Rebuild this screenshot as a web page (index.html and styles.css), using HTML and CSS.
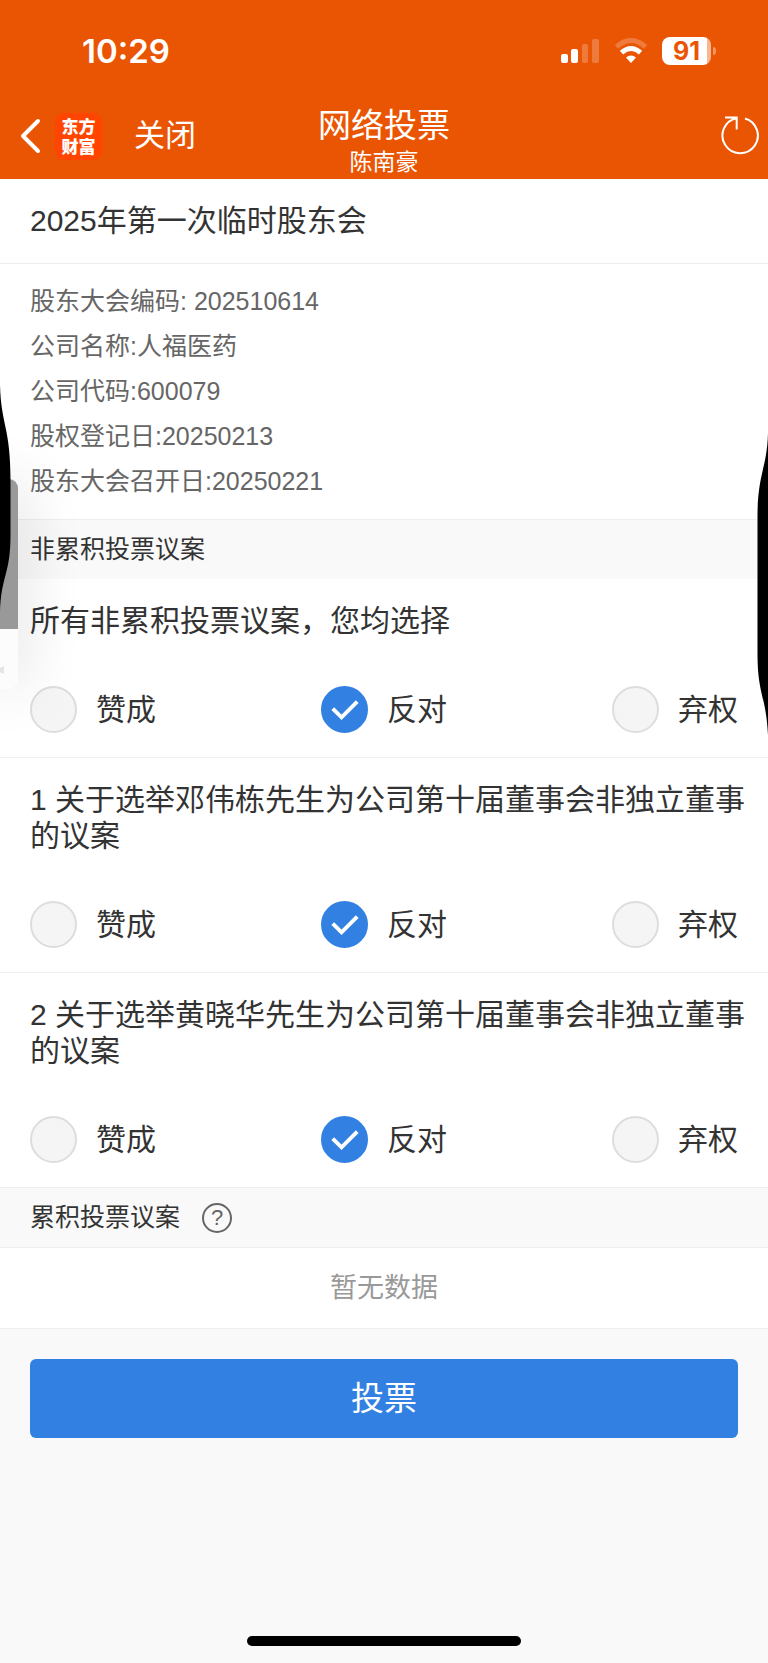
FILE: index.html
```html
<!DOCTYPE html>
<html lang="zh-CN">
<head>
<meta charset="utf-8">
<meta name="viewport" content="width=device-width, initial-scale=1">
<title>网络投票</title>
<link rel="stylesheet" href="styles.css">
</head>
<body>
<div class="app">
  <header class="top">
    <div class="status">
      <span class="status-time">10:29</span>
      <div class="status-icons">
        <svg class="signal" width="40" height="26" viewBox="0 0 40 26" fill="#fff" aria-hidden="true">
          <rect x="1" y="16" width="7" height="9" rx="2"/>
          <rect x="11" y="11" width="7" height="14" rx="2"/>
          <rect x="22" y="6" width="6" height="19" rx="2" opacity=".22"/>
          <rect x="32" y="1" width="7" height="24" rx="2" opacity=".22"/>
        </svg>
        <svg class="wifi" width="34" height="26" viewBox="0 0 34 26" aria-hidden="true">
          <path d="M2.5 8.8Q17-3.8 31.500 8.800" fill="none" stroke="#fff" stroke-width="5" opacity=".22"/>
          <path d="M7.500 14.600Q17 6.400 26.500 14.600" fill="none" stroke="#fff" stroke-width="5"/>
          <path d="M12 19.500Q17 15.500 22 19.500L17 25Z" fill="#fff"/>
        </svg>
        <div class="battery"><span class="battery-body">91</span><span class="battery-tip"></span></div>
      </div>
    </div>
    <nav class="nav">
      <div class="nav-left">
        <button class="icon-button" type="button" aria-label="返回">
          <svg width="22" height="36" viewBox="0 0 22 36" fill="none" stroke="#fff" stroke-width="4" stroke-linecap="round" stroke-linejoin="round"><path d="M19 3L4 18L19 33"/></svg>
        </button>
        <div class="logo"><span class="logo-text">东方财富</span></div>
        <button class="close" type="button">关闭</button>
      </div>
      <div class="nav-title">
        <h1 class="page-title">网络投票</h1>
        <p class="user-name">陈南豪</p>
      </div>
      <button class="icon-button refresh" type="button" aria-label="刷新">
        <svg width="40" height="40" viewBox="0 0 40 40" fill="none" stroke="#fff" stroke-width="2"><path d="M24 2.500A17.700 17.700 0 1 1 15.500 2.200M4 1.500H15.700V13.500"/></svg>
      </button>
    </nav>
  </header>

  <main>
    <h2 class="meeting">2025年第一次临时股东会</h2>
    <div class="details">
      <p>股东大会编码: 202510614</p>
      <p>公司名称:人福医药</p>
      <p>公司代码:600079</p>
      <p>股权登记日:20250213</p>
      <p>股东大会召开日:20250221</p>
    </div>

    <form>
      <h3 class="section">非累积投票议案</h3>

      <fieldset class="proposal">
        <legend class="question">所有非累积投票议案，您均选择</legend>
        <div class="options">
          <label class="option"><span class="mark"><input class="radio" type="radio" name="all"><svg class="tick" viewBox="0 0 48 48"><path d="M12 23L21 32L37 16"/></svg></span>赞成</label>
          <label class="option"><span class="mark"><input class="radio" type="radio" name="all" checked><svg class="tick" viewBox="0 0 48 48"><path d="M12 23L21 32L37 16"/></svg></span>反对</label>
          <label class="option"><span class="mark"><input class="radio" type="radio" name="all"><svg class="tick" viewBox="0 0 48 48"><path d="M12 23L21 32L37 16"/></svg></span>弃权</label>
        </div>
      </fieldset>

      <fieldset class="proposal">
        <legend class="question">1 关于选举邓伟栋先生为公司第十届董事会非独立董事的议案</legend>
        <div class="options">
          <label class="option"><span class="mark"><input class="radio" type="radio" name="p1"><svg class="tick" viewBox="0 0 48 48"><path d="M12 23L21 32L37 16"/></svg></span>赞成</label>
          <label class="option"><span class="mark"><input class="radio" type="radio" name="p1" checked><svg class="tick" viewBox="0 0 48 48"><path d="M12 23L21 32L37 16"/></svg></span>反对</label>
          <label class="option"><span class="mark"><input class="radio" type="radio" name="p1"><svg class="tick" viewBox="0 0 48 48"><path d="M12 23L21 32L37 16"/></svg></span>弃权</label>
        </div>
      </fieldset>

      <fieldset class="proposal last">
        <legend class="question">2 关于选举黄晓华先生为公司第十届董事会非独立董事的议案</legend>
        <div class="options">
          <label class="option"><span class="mark"><input class="radio" type="radio" name="p2"><svg class="tick" viewBox="0 0 48 48"><path d="M12 23L21 32L37 16"/></svg></span>赞成</label>
          <label class="option"><span class="mark"><input class="radio" type="radio" name="p2" checked><svg class="tick" viewBox="0 0 48 48"><path d="M12 23L21 32L37 16"/></svg></span>反对</label>
          <label class="option"><span class="mark"><input class="radio" type="radio" name="p2"><svg class="tick" viewBox="0 0 48 48"><path d="M12 23L21 32L37 16"/></svg></span>弃权</label>
        </div>
      </fieldset>

      <h3 class="section">累积投票议案 <button class="help" type="button" aria-label="说明">?</button></h3>
      <p class="empty">暂无数据</p>
      <div class="submit-row"><button class="submit" type="submit">投票</button></div>
    </form>
  </main>

  <footer class="home"><div class="home-bar"></div></footer>

  <div class="panel" aria-hidden="true">
    <div class="panel-top"></div>
    <svg class="panel-icon" width="6" height="10" viewBox="0 0 6 10"><path d="M0 3L4 1V9L0 7Z" fill="#e4e4e4"/></svg>
  </div>
  <svg class="edge edge-left" width="12" height="228" viewBox="0 0 12 228" aria-hidden="true"><path d="M0 0C1 40 10.500 42 10.500 95V150C10.500 190 1 190 0 228Z"/></svg>
  <svg class="edge edge-right" width="12" height="302" viewBox="0 0 12 302" aria-hidden="true"><path d="M12 0C11 36 1.500 40 1.500 84V220C1.500 262 10 262 12 302Z"/></svg>
</div>
</body>
</html>
```

FILE: styles.css
```css
* {
  box-sizing: border-box;
}

body,
h1,
h2,
h3,
p,
fieldset,
legend {
  margin: 0;
  padding: 0;
  border: 0;
  font-weight: 400;
}

body {
  background: #f9f9f9;
  color: #333;
  font-family: "Liberation Sans", "Noto Sans CJK SC", sans-serif;
  font-size: 30px;
}

button {
  padding: 0;
  border: 0;
  background: none;
  color: inherit;
  font-family: inherit;
}

svg {
  display: block;
}

.app {
  position: relative;
  display: flex;
  flex-direction: column;
  min-height: 100vh;
  overflow: hidden;
}

/* Header */
.top {
  background: #ea5504;
  color: #fff;
}

.status {
  display: flex;
  justify-content: space-between;
  align-items: center;
  padding: 30px 52px 21px 82px;
}

.status-time {
  font: 600 33px/42px Inter, sans-serif;
}

.status-icons {
  display: flex;
  align-items: center;
  gap: 14px;
}

.battery {
  display: flex;
  align-items: center;
  gap: 2px;
}

.battery-body {
  width: 49px;
  border-radius: 8px;
  background: linear-gradient(to right, #fff 45px, #f7b794 45px);
  color: #ea5504;
  font: 700 25px/28px Inter, sans-serif;
  text-align: center;
}

.battery-tip {
  width: 3px;
  height: 8px;
  border-radius: 0 4px 4px 0;
  background: #f19460;
}

.nav {
  display: grid;
  grid-template-columns: 1fr auto 1fr;
  align-items: center;
  height: 86px;
  padding: 0 7px 0 19px;
}

.nav-left {
  display: flex;
  align-items: center;
}

.logo {
  display: flex;
  align-items: center;
  justify-content: center;
  width: 47px;
  height: 47px;
  margin: 0 32px 0 14px;
  border-radius: 9px;
  background: #ff4500;
}

.logo-text {
  width: 34px;
  font: 900 17px/20px "Noto Sans CJK SC", sans-serif;
}

.close {
  font-size: 31px;
  line-height: 40px;
}

.nav-title {
  padding: 9px 12px 0 0;
  text-align: center;
}

.page-title {
  font-size: 33px;
  line-height: 42px;
}

.user-name {
  font-size: 23px;
  line-height: 30px;
}

.refresh {
  justify-self: end;
}

/* Meeting */
.meeting {
  padding: 20px 30px;
  border-bottom: 1px solid #ececec;
  background: #fff;
  font-size: 30px;
  line-height: 44px;
}

.details {
  padding: 15px 30px;
  background: #fff;
  color: #666;
  font-size: 25px;
  line-height: 45px;
}

.section {
  display: flex;
  align-items: center;
  gap: 22px;
  padding: 0 30px;
  border-top: 1px solid #eee;
  font-size: 25px;
  line-height: 59px;
}

.help {
  width: 30px;
  height: 30px;
  border: 2px solid #666;
  border-radius: 50%;
  color: #666;
  font-size: 22px;
  line-height: 26px;
}

/* Proposals */
.proposal {
  min-width: 0;
  padding: 24px 30px;
  border-bottom: 1px solid #f0f0f0;
  background: #fff;
}

.last {
  border-bottom: 0;
}

/* Floating the legend keeps it inside the padding of its fieldset */
.question {
  float: left;
  margin-right: -12px;
  padding-bottom: 47px;
  line-height: 36px;
}

.options {
  display: flex;
  clear: both;
  justify-content: space-between;
}

.option {
  display: flex;
  align-items: center;
  gap: 19px;
  line-height: 40px;
}

.mark {
  display: grid;
  width: 47px;
  height: 47px;
}

.radio,
.tick {
  grid-area: 1 / 1;
}

.radio {
  appearance: none;
  width: 47px;
  height: 47px;
  margin: 0;
  border: 2px solid #ddd;
  border-radius: 50%;
  background: #f5f5f5;
}

.radio:checked {
  border-color: #3281e2;
  background: #3281e2;
}

.tick {
  visibility: hidden;
  pointer-events: none;
  fill: none;
  stroke: #fff;
  stroke-width: 4;
}

.radio:checked + .tick {
  visibility: visible;
  z-index: 1;
}

.empty {
  padding: 20px 0;
  border-top: 1px solid #eee;
  border-bottom: 1px solid #eee;
  background: #fff;
  color: #999;
  font-size: 27px;
  line-height: 40px;
  text-align: center;
}

.submit-row {
  padding: 30px;
}

.submit {
  width: 100%;
  border-radius: 6px;
  background: #3281e2;
  color: #fff;
  font-size: 33px;
  line-height: 79px;
}

.home {
  display: flex;
  justify-content: center;
  margin-top: auto;
  padding-bottom: 17px;
}

.home-bar {
  width: 274px;
  height: 10px;
  border-radius: 5px;
  background: #000;
}

/* Floating pieces over the window edges */
.panel {
  position: absolute;
  top: 479px;
  left: 0;
  width: 18px;
  height: 210px;
  border-radius: 0 9px 9px 0;
  background: #fcfcfc;
  box-shadow: 0 0 56px rgba(0, 0, 0, .22);
}

.panel-top {
  height: 150px;
  border-radius: 0 9px 0 0;
  background: #999;
}

.panel-icon {
  margin-top: 36px;
}

.edge {
  position: absolute;
}

.edge-left {
  top: 385px;
  left: 0;
}

.edge-right {
  top: 433px;
  right: 0;
}
```
